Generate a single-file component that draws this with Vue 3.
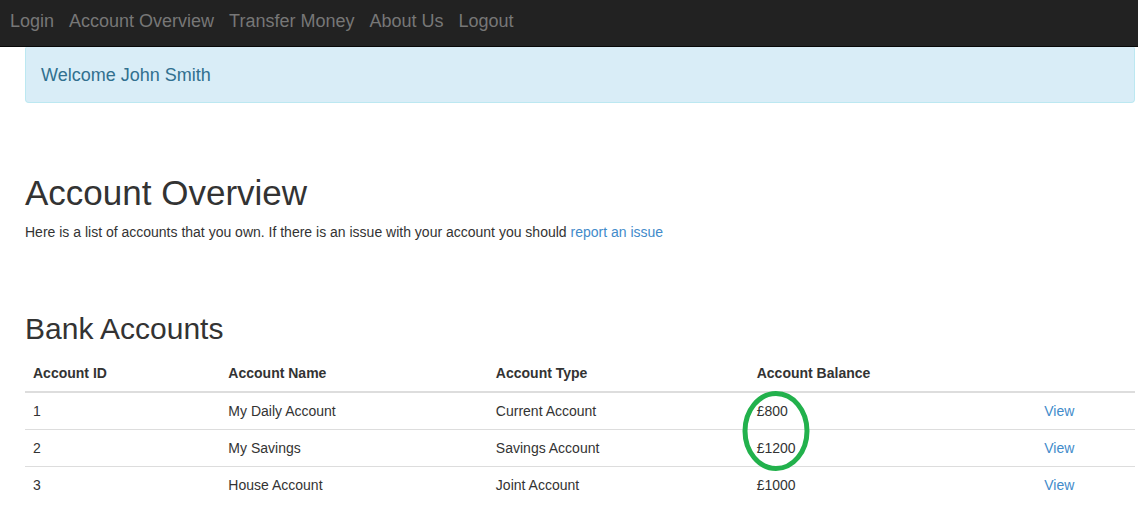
<script setup>
const links = ['Login', 'Account Overview', 'Transfer Money', 'About Us', 'Logout']
const accounts = [
  { id: 1, name: 'My Daily Account', type: 'Current Account', balance: '£800' },
  { id: 2, name: 'My Savings', type: 'Savings Account', balance: '£1200' },
  { id: 3, name: 'House Account', type: 'Joint Account', balance: '£1000' },
]
</script>

<template>
  <nav class="navbar">
    <a v-for="link in links" :key="link" href="#">{{ link }}</a>
  </nav>
  <main class="container">
    <div class="alert">Welcome John Smith</div>
    <h1>Account Overview</h1>
    <p>Here is a list of accounts that you own. If there is an issue with your account you should <a href="#">report an issue</a></p>
    <h2>Bank Accounts</h2>
    <table>
      <colgroup>
        <col class="c-id"><col class="c-name"><col class="c-type"><col class="c-balance"><col>
      </colgroup>
      <thead>
        <tr>
          <th>Account ID</th>
          <th>Account Name</th>
          <th>Account Type</th>
          <th>Account Balance</th>
          <th></th>
        </tr>
      </thead>
      <tbody>
        <tr v-for="(account, index) in accounts" :key="account.id">
          <td>{{ account.id }}</td>
          <td>{{ account.name }}</td>
          <td>{{ account.type }}</td>
          <td class="balance">
            {{ account.balance }}
            <svg v-if="index === 0" class="ring" width="68" height="80" viewBox="0 0 68 80" aria-hidden="true">
              <ellipse cx="34" cy="40" rx="31" ry="37.5" fill="none" stroke="#22b14c" stroke-width="5" />
            </svg>
          </td>
          <td><a href="#">View</a></td>
        </tr>
      </tbody>
    </table>
  </main>
</template>

<style>
body {
  background: #fff;
}
</style>

<style scoped>
.navbar {
  display: flex;
  gap: 15px;
  padding: 11px 10px 15px;
  background: #222;
  border-bottom: 1px solid #080808;
  font: 18px/20px "Liberation Sans", Arial, sans-serif;
}
.navbar a {
  color: #777;
  text-decoration: none;
}
.container {
  padding: 0 3px 0 25px;
  font: 14px/20px "Liberation Sans", Arial, sans-serif;
  color: #333;
}
.alert {
  padding: 18px 15px 16px;
  background: #d9edf7;
  border: 1px solid #bce8f1;
  border-top: 0;
  border-radius: 2px 2px 4px 4px;
  color: #31708f;
  font-size: 18px;
  line-height: 21px;
}
h1 {
  margin: 70px 0 10px;
  font-size: 35px;
  font-weight: 400;
  line-height: 39px;
}
p {
  margin: 0;
}
h2 {
  margin: 70px 0 10px;
  font-size: 30px;
  font-weight: 400;
  line-height: 33px;
}
a {
  color: #428bca;
  text-decoration: none;
}
table {
  width: 100%;
  table-layout: fixed;
  border-collapse: collapse;
}
.c-id {
  width: 17.6%;
}
.c-name {
  width: 24.1%;
}
.c-type {
  width: 23.5%;
}
.c-balance {
  width: 25.9%;
}
th,
td {
  padding: 8px;
  text-align: left;
}
th {
  border-bottom: 2px solid #ddd;
}
tbody tr + tr td {
  border-top: 1px solid #ddd;
}
.balance {
  position: relative;
}
.ring {
  position: absolute;
  top: -2px;
  left: -7px;
  pointer-events: none;
}
</style>
